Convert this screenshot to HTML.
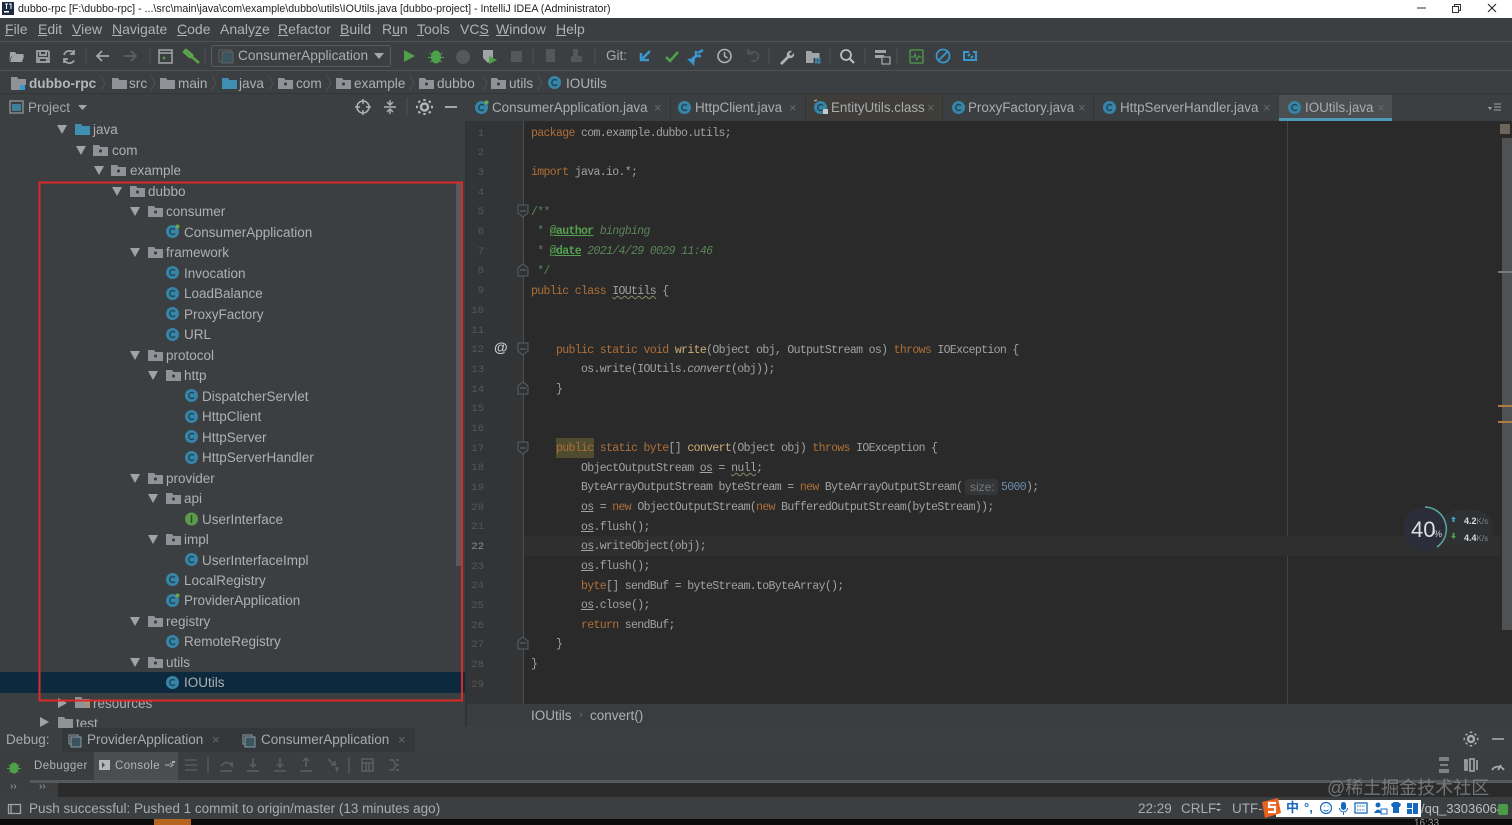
<!DOCTYPE html>
<html><head><meta charset="utf-8"><title>dubbo-rpc</title>
<style>
*{box-sizing:border-box}
html,body{margin:0;padding:0;width:1512px;height:825px;overflow:hidden;background:#3c3f41}
body{position:relative;font-family:"Liberation Sans","Noto Sans CJK SC",sans-serif;color:#b4b6b8;font-size:14px}
.b{position:absolute}
.t{position:absolute;white-space:pre;line-height:20px;height:20px}
.m{position:absolute;top:19px;font-size:14px;line-height:21px;color:#b0b2b4;white-space:pre}
.cr{position:absolute;top:74px;line-height:20px;font-size:13.6px;color:#aeb0b2;white-space:pre}
.tab{position:absolute;top:97px;line-height:21px;font-size:13.4px;color:#aaacae;white-space:pre}
.x{position:absolute;top:98px;line-height:20px;font-size:13px;color:#65686a}
.r{position:absolute;font-size:13.5px;line-height:20px;color:#aeb0b2;white-space:pre;margin-top:1px}
.n{position:absolute;left:470px;width:14px;text-align:right;font:10.5px/14px "Liberation Mono",monospace;color:#55585a;margin-top:1px}
.l{position:absolute;font:11.5px/16px "Liberation Mono",monospace;letter-spacing:-.65px;color:#a0a2a3;white-space:pre;margin-top:1px}
.k{color:#ad6f38}.f{color:#cdae78}.g{color:#5a8558}.gb{color:#55a050;font-weight:bold;text-decoration:underline}
.u{text-decoration:underline}
.w{text-decoration:underline wavy #8a8a6a 1px}
.s{font-size:13.5px;color:#a9abad;margin-top:1px}
</style></head><body>
<!-- title bar -->
<div class="b" style="left:0;top:0;width:1512px;height:18px;background:#fff"></div>
<div class="t" style="left:18px;top:-1px;font-size:10.65px;color:#222">dubbo-rpc [F:\dubbo-rpc] - ...\src\main\java\com\example\dubbo\utils\IOUtils.java [dubbo-project] - IntelliJ IDEA (Administrator)</div>
<!-- bars -->
<div class="b" style="left:0;top:41px;width:1512px;height:1px;background:#505254"></div>
<div class="b" style="left:0;top:70px;width:1512px;height:1px;background:#505254"></div>
<div class="b" style="left:0;top:93px;width:1512px;height:1px;background:#333537"></div>
<!-- menu -->
<div class="m" style="left:5px"><u>F</u>ile</div><div class="m" style="left:38px"><u>E</u>dit</div><div class="m" style="left:72px"><u>V</u>iew</div><div class="m" style="left:112px"><u>N</u>avigate</div><div class="m" style="left:177px"><u>C</u>ode</div><div class="m" style="left:220px">Analy<u>z</u>e</div><div class="m" style="left:278px"><u>R</u>efactor</div><div class="m" style="left:340px"><u>B</u>uild</div><div class="m" style="left:382px">R<u>u</u>n</div><div class="m" style="left:417px"><u>T</u>ools</div><div class="m" style="left:460px">VC<u>S</u></div><div class="m" style="left:496px"><u>W</u>indow</div><div class="m" style="left:556px"><u>H</u>elp</div>
<!-- run config -->
<div class="b" style="left:211px;top:45px;width:180px;height:22px;border:1px solid #5a5d5f;border-radius:3px"></div>
<div class="t" style="left:238px;top:46px;font-size:13.7px;color:#aaacae">ConsumerApplication</div>
<div class="t" style="left:606px;top:46px;font-size:13.5px;color:#a8aaac">Git:</div>
<!-- breadcrumbs -->
<div class="cr" style="left:29px;font-weight:bold;color:#b4b6b8">dubbo-rpc</div><div class="cr" style="left:129px">src</div><div class="cr" style="left:178px">main</div><div class="cr" style="left:239px">java</div><div class="cr" style="left:296px">com</div><div class="cr" style="left:354px">example</div><div class="cr" style="left:437px">dubbo</div><div class="cr" style="left:509px">utils</div><div class="cr" style="left:566px">IOUtils</div>
<!-- project header -->
<div class="t" style="left:28px;top:98px;font-size:13.5px;color:#a4a6a8">Project</div>
<!-- tabs -->
<div class="b" style="left:467px;top:94px;width:1045px;height:27px;background:#3c3f41"></div>
<div class="b" style="left:805px;top:94px;width:137px;height:27px;background:#3f3d39"></div>
<div class="b" style="left:1279px;top:95px;width:113px;height:26px;background:#4b4f52"></div>
<div class="b" style="left:1279px;top:118px;width:113px;height:3px;background:#4a9ab5"></div>
<div class="tab" style="left:492px">ConsumerApplication.java</div><div class="x" style="left:654px">×</div>
<div class="tab" style="left:695px">HttpClient.java</div><div class="x" style="left:789px">×</div>
<div class="tab" style="left:831px">EntityUtils.class</div><div class="x" style="left:927px">×</div>
<div class="tab" style="left:968px">ProxyFactory.java</div><div class="x" style="left:1078px">×</div>
<div class="tab" style="left:1120px">HttpServerHandler.java</div><div class="x" style="left:1263px">×</div>
<div class="tab" style="left:1305px">IOUtils.java</div><div class="x" style="left:1377px">×</div>
<div class="b" style="left:670px;top:94px;width:1px;height:27px;background:#333"></div><div class="b" style="left:805px;top:94px;width:1px;height:27px;background:#333"></div><div class="b" style="left:942px;top:94px;width:1px;height:27px;background:#333"></div><div class="b" style="left:1093px;top:94px;width:1px;height:27px;background:#333"></div>
<!-- tree -->
<div class="b" style="left:0;top:672px;width:465px;height:21px;background:#0d293e"></div>
<div class="b" style="left:456px;top:182px;width:6px;height:384px;background:#585b5d"></div>
<div class="r" style="left:93px;top:119px">java</div>
<div class="r" style="left:112px;top:140px">com</div>
<div class="r" style="left:130px;top:160px">example</div>
<div class="r" style="left:148px;top:181px">dubbo</div>
<div class="r" style="left:166px;top:201px">consumer</div>
<div class="r" style="left:184px;top:222px">ConsumerApplication</div>
<div class="r" style="left:166px;top:242px">framework</div>
<div class="r" style="left:184px;top:263px">Invocation</div>
<div class="r" style="left:184px;top:283px">LoadBalance</div>
<div class="r" style="left:184px;top:304px">ProxyFactory</div>
<div class="r" style="left:184px;top:324px">URL</div>
<div class="r" style="left:166px;top:345px">protocol</div>
<div class="r" style="left:184px;top:365px">http</div>
<div class="r" style="left:202px;top:386px">DispatcherServlet</div>
<div class="r" style="left:202px;top:406px">HttpClient</div>
<div class="r" style="left:202px;top:427px">HttpServer</div>
<div class="r" style="left:202px;top:447px">HttpServerHandler</div>
<div class="r" style="left:166px;top:468px">provider</div>
<div class="r" style="left:184px;top:488px">api</div>
<div class="r" style="left:202px;top:509px">UserInterface</div>
<div class="r" style="left:184px;top:529px">impl</div>
<div class="r" style="left:202px;top:550px">UserInterfaceImpl</div>
<div class="r" style="left:184px;top:570px">LocalRegistry</div>
<div class="r" style="left:184px;top:590px">ProviderApplication</div>
<div class="r" style="left:166px;top:611px">registry</div>
<div class="r" style="left:184px;top:631px">RemoteRegistry</div>
<div class="r" style="left:166px;top:652px">utils</div>
<div class="r" style="left:184px;top:672px">IOUtils</div>
<div class="r" style="left:93px;top:693px">resources</div>
<div class="r" style="left:76px;top:713px">test</div>
<!-- editor -->
<div class="b" style="left:465px;top:121px;width:2px;height:606px;background:#303234"></div>
<div class="b" style="left:467px;top:121px;width:56px;height:583px;background:#323436"></div>
<div class="b" style="left:523px;top:121px;width:989px;height:583px;background:#2a2a2a"></div>
<div class="b" style="left:523px;top:121px;width:1px;height:583px;background:#4d4f50"></div>
<div class="b" style="left:1287px;top:121px;width:1px;height:583px;background:#434343"></div>
<div class="b" style="left:524px;top:536px;width:976px;height:20px;background:#2f2f2f"></div>
<div class="b" style="left:1502px;top:138px;width:10px;height:492px;background:#4f5153"></div>
<div class="b" style="left:1500px;top:124px;width:10px;height:10px;background:#6d655c"></div>
<div class="b" style="left:1498px;top:271px;width:14px;height:2px;background:#77797b"></div>
<div class="b" style="left:1498px;top:405px;width:14px;height:2px;background:#b07c42"></div>
<div class="b" style="left:1498px;top:421px;width:14px;height:2px;background:#b07c42"></div>
<div class="b" style="left:556px;top:438px;width:38px;height:20px;background:#4f4c30"></div>
<div class="b" style="left:965px;top:479px;width:33px;height:16px;background:#353637;border-radius:3px"></div>
<!-- line numbers -->
<div class="n" style="top:126px">1</div><div class="n" style="top:145px">2</div><div class="n" style="top:165px">3</div><div class="n" style="top:185px">4</div><div class="n" style="top:204px">5</div><div class="n" style="top:224px">6</div><div class="n" style="top:244px">7</div><div class="n" style="top:263px">8</div><div class="n" style="top:283px">9</div><div class="n" style="top:303px">10</div><div class="n" style="top:323px">11</div><div class="n" style="top:342px">12</div><div class="n" style="top:362px">13</div><div class="n" style="top:382px">14</div><div class="n" style="top:401px">15</div><div class="n" style="top:421px">16</div><div class="n" style="top:441px">17</div><div class="n" style="top:460px">18</div><div class="n" style="top:480px">19</div><div class="n" style="top:500px">20</div><div class="n" style="top:519px">21</div><div class="n" style="top:539px;color:#8a8c8e">22</div><div class="n" style="top:559px">23</div><div class="n" style="top:578px">24</div><div class="n" style="top:598px">25</div><div class="n" style="top:618px">26</div><div class="n" style="top:637px">27</div><div class="n" style="top:657px">28</div><div class="n" style="top:677px">29</div>
<div class="t" style="left:494px;top:337px;font-size:14px;font-weight:bold;color:#c8cacc">@</div>
<!-- code -->
<div class="l" style="left:531px;top:125px"><span class="k">package</span> com.example.dubbo.utils;</div>
<div class="l" style="left:531px;top:164px"><span class="k">import</span> java.io.*;</div>
<div class="l g" style="left:531px;top:204px">/**</div>
<div class="l g" style="left:531px;top:223px"> * <span class="gb">@author</span> <i>bingbing</i></div>
<div class="l g" style="left:531px;top:243px"> * <span class="gb">@date</span> <i>2021/4/29 0029 11:46</i></div>
<div class="l g" style="left:531px;top:263px"> */</div>
<div class="l" style="left:531px;top:283px"><span class="k">public class</span> <span class="w">IOUtils</span> {</div>
<div class="l" style="left:531px;top:342px">    <span class="k">public static void</span> <span class="f">write</span>(Object obj, OutputStream os) <span class="k">throws</span> IOException {</div>
<div class="l" style="left:531px;top:361px">        os.write(IOUtils.<i>convert</i>(obj));</div>
<div class="l" style="left:531px;top:381px">    }</div>
<div class="l" style="left:531px;top:440px">    <span class="k">public static byte</span>[] <span class="f">convert</span>(Object obj) <span class="k">throws</span> IOException {</div>
<div class="l" style="left:531px;top:460px">        ObjectOutputStream <span class="u">os</span> = <span class="w">null</span>;</div>
<div class="l" style="left:531px;top:479px">        ByteArrayOutputStream byteStream = <span class="k">new</span> ByteArrayOutputStream(</div>
<div class="t" style="left:970px;top:477px;font-size:12px;color:#777a7c">size:</div>
<div class="l" style="left:1001px;top:479px"><span style="color:#6b8db0">5000</span>);</div>
<div class="l" style="left:531px;top:499px">        <span class="u">os</span> = <span class="k">new</span> ObjectOutputStream(<span class="k">new</span> BufferedOutputStream(byteStream));</div>
<div class="l" style="left:531px;top:519px">        <span class="u">os</span>.flush();</div>
<div class="l" style="left:531px;top:538px">        <span class="u">os</span>.writeObject(obj);</div>
<div class="l" style="left:531px;top:558px">        <span class="u">os</span>.flush();</div>
<div class="l" style="left:531px;top:578px">        <span class="k">byte</span>[] sendBuf = byteStream.toByteArray();</div>
<div class="l" style="left:531px;top:597px">        <span class="u">os</span>.close();</div>
<div class="l" style="left:531px;top:617px">        <span class="k">return</span> sendBuf;</div>
<div class="l" style="left:531px;top:636px">    }</div>
<div class="l" style="left:531px;top:656px">}</div>
<!-- editor breadcrumb -->
<div class="b" style="left:467px;top:704px;width:1045px;height:23px;background:#3a3c3e"></div>
<div class="t s" style="left:531px;top:705px;color:#aeb0b2">IOUtils</div>
<div class="t" style="left:579px;top:705px;font-size:11px;color:#66686a">›</div>
<div class="t s" style="left:590px;top:705px;color:#aeb0b2">convert()</div>
<!-- debug -->
<div class="b" style="left:0;top:727px;width:1512px;height:25px;background:#3c3f41"></div>
<div class="b" style="left:62px;top:728px;width:168px;height:24px;background:#35383a"></div>
<div class="b" style="left:230px;top:728px;width:185px;height:24px;background:#35383a"></div>
<div class="t s" style="left:6px;top:729px">Debug:</div>
<div class="t s" style="left:87px;top:729px">ProviderApplication</div><div class="t" style="left:212px;top:730px;font-size:13px;color:#65686a">×</div>
<div class="t s" style="left:261px;top:729px">ConsumerApplication</div><div class="t" style="left:398px;top:730px;font-size:13px;color:#65686a">×</div>
<div class="b" style="left:0;top:752px;width:1512px;height:28px;background:#3b3d3f"></div>
<div class="b" style="left:94px;top:752px;width:84px;height:28px;background:#4b4e50"></div>
<div class="t" style="left:34px;top:756px;font-size:11.5px;letter-spacing:.4px;color:#b0b2b4">Debugger</div>
<div class="t" style="left:115px;top:756px;font-size:11.5px;letter-spacing:.4px;color:#b0b2b4">Console</div>
<div class="b" style="left:30px;top:780px;width:1482px;height:3px;background:#56595b"></div>
<div class="b" style="left:0;top:780px;width:30px;height:17px;background:#3b3d3f"></div>
<div class="b" style="left:30px;top:783px;width:28px;height:14px;background:#3b3d3f"></div>
<div class="b" style="left:58px;top:783px;width:1454px;height:14px;background:#2b2b2b"></div>
<div class="t" style="left:10px;top:777px;font-size:10px;color:#a0a2a4">››</div><div class="t" style="left:39px;top:777px;font-size:10px;color:#a0a2a4">››</div>
<!-- status -->
<div class="b" style="left:0;top:797px;width:1512px;height:22px;background:#3c3f41"></div>
<div class="t s" style="left:29px;top:798px">Push successful: Pushed 1 commit to origin/master (13 minutes ago)</div>
<div class="t s" style="left:1138px;top:798px">22:29</div>
<div class="t s" style="left:1181px;top:798px">CRLF</div>
<div class="t s" style="left:1232px;top:798px">UTF-</div>
<div class="t" style="left:1421px;top:799px;font-size:13px;color:#bcbec0">/qq_33036064</div>
<div class="b" style="left:0;top:819px;width:1512px;height:6px;background:#0c0c0c;overflow:hidden"><div class="t" style="left:1414px;top:-5px;font-size:10px;color:#999">16:33</div></div>
<div class="b" style="left:154px;top:819px;width:37px;height:6px;background:#b5651d"></div>
<div class="b" style="left:1276px;top:800px;width:145px;height:17px;background:#fff"></div>
<div class="t" style="left:1286px;top:798px;font-size:13px;font-weight:bold;color:#1769c0">中</div>
<div class="t" style="left:1304px;top:798px;font-size:13px;font-weight:bold;color:#1769c0">°,</div>
<div class="t" style="left:1327px;top:778px;font-size:18px;color:#8a8c8e;opacity:.75">@稀土掘金技术社区</div>
<!-- all icons -->
<svg class="b" style="left:0;top:0" width="1512" height="825" viewBox="0 0 1512 825" fill="none">
<defs>
<g id="fd"><path d="M0 2h6l1.500 2H15v9H0z" fill="#8f9296"/><rect x="6" y="6.500" width="3" height="3" rx="1" fill="#3c3f41"/></g>
<g id="fp"><path d="M0 2h6l1.500 2H15v9H0z" fill="#8f9296"/></g>
<g id="fb"><path d="M0 2h6l1.500 2H15v9H0z" fill="#3f8fb3"/></g>
<path id="ad" d="M0 0h10L5 9z" fill="#a0a2a4"/>
<path id="ar" d="M0 0l9 5-9 5z" fill="#a0a2a4"/>
<g id="cc"><circle cx="6.500" cy="6.500" r="6.500" fill="#3785a8"/><path d="M9 4.500A3 3 0 1 0 9 8.500" stroke="#1f4a5c" stroke-width="1.500"/></g>
<g id="ca"><use href="#cc"/><circle cx="11.500" cy="1.500" r="2" fill="#6aa84f"/></g>
<path id="fo" d="M0 0h10v8l-5 4-5-4z" stroke="#5c5f61" fill="#2f3133"/>
<path id="fc" d="M0 12h10V4L5 0 0 4z" stroke="#5c5f61" fill="#2f3133"/>
</defs>
<!-- logo & window buttons -->
<rect x="2" y="2" width="12" height="13" fill="#1c2a44"/><path d="M4 11h5v1.500H4z" fill="#fff"/><path d="M5 4h3M6.500 4v5M9 4h2v5" stroke="#fff"/>
<path d="M1417 8h9" stroke="#333"/><path d="M1452.500 6.500h6v6h-6zM1454.500 6.500v-2h6v6h-2" stroke="#333"/><path d="M1488 4l8 8M1496 4l-8 8" stroke="#222" stroke-width="1.100"/>
<!-- toolbar -->
<path d="M10 52h5l1.500 2h7v2h-12l-2 5zM12 56h12l-2 6H10z" fill="#a2a5a8"/>
<path d="M37 51h11l1 1v10H37zM40 51v4h6v-4M39 58h8v4h-8z" stroke="#a2a5a8" stroke-width="1.700"/>
<path d="M74 53.500A5.500 5.500 0 0 0 64 55M64 59a5.500 5.500 0 0 0 10 1.500M74 50v4h-4M64 63v-4h4" stroke="#a2a5a8" stroke-width="1.700"/>
<path d="M86 48v16M150 48v16M205 48v16M533 48v16M595 48v16M769 48v16M830 48v16M865 48v16M897 48v16" stroke="#4d5052"/>
<path d="M109 56H97M102 51l-5 5 5 5" stroke="#a2a5a8" stroke-width="1.800"/>
<path d="M124 56h12M131 51l5 5-5 5" stroke="#5c5f61" stroke-width="1.800"/>
<path d="M159 50h13v13h-13zM159 53h13" stroke="#a2a5a8" stroke-width="1.500"/><path d="M163 56l3 2-3 2z" fill="#5a9a4a"/>
<path d="M186 50l6 5-2 2-6-5zM191 56l8 7" stroke="#5aa64c" stroke-width="2.500"/>
<rect x="219" y="50" width="12" height="12" stroke="#5e6264" stroke-width="1"/><rect x="222" y="52" width="11" height="11" fill="#3a5560" stroke="#5e6264"/>
<path d="M374 53h10l-5 6z" fill="#a5a7a9"/>
<path d="M404 50l11 6-11 6z" fill="#4ea04a"/>
<g fill="#4ea04a"><ellipse cx="436" cy="57" rx="5" ry="6.500"/><path d="M429 52l3 2-1 1zM443 52l-3 2 1 1zM428 57h4v1h-4zM440 57h4v1h-4zM429 63l3-3 1 1zM443 63l-3-3-1 1z"/></g>
<circle cx="463" cy="57" r="7" fill="#565859"/>
<path d="M483 50h10v8l-5 5-5-5z" fill="#a2a5a8"/><path d="M489 56l8 4-8 4z" fill="#4ea04a"/>
<rect x="511" y="51" width="11" height="11" fill="#55575a"/>
<path d="M546 49h9v13h-9z" fill="#55575a"/><path d="M573 49h5v7h4v6h-11v-6h2z" fill="#55575a"/>
<path d="M650 51l-8 8M641 53v7h8" stroke="#3a97d0" stroke-width="2.500"/>
<path d="M666 57l4 4 8-9" stroke="#4ea04a" stroke-width="2.500"/>
<path d="M691 60l5-4M698 53l5-3M696 51v5h5M695 60h-5l3 3v-3" stroke="#3a97d0" stroke-width="2.500"/>
<circle cx="724.500" cy="56" r="6.500" stroke="#b0b2b4" stroke-width="1.600"/><path d="M724.500 52v4l3 2" stroke="#b0b2b4" stroke-width="1.500"/>
<path d="M748 52h6a4.500 4.500 0 0 1 0 9h-3M748 49v5h5" stroke="#555759" stroke-width="1.500"/>
<path d="M780 63l7-7a4 4 0 0 1 5-5l-3 3 2 2 3-3a4 4 0 0 1-5 5l-7 7z" fill="#b0b2b4"/>
<path d="M806 51h5l1.500 2h7v5h-6v5h-7.500z" fill="#a2a5a8"/><rect x="815" y="58" width="2.500" height="2.500" fill="#3b8cb0"/><rect x="818" y="58" width="2.500" height="2.500" fill="#3b8cb0"/><rect x="815" y="61" width="2.500" height="2.500" fill="#3b8cb0"/><rect x="818" y="61" width="2.500" height="2.500" fill="#3b8cb0"/>
<circle cx="846" cy="55" r="5" stroke="#bbbdbf" stroke-width="1.800"/><path d="M850 59l4 4" stroke="#bbbdbf" stroke-width="2.200"/>
<path d="M875 50h11v3h-11zM875 55h9v3h-9z" fill="#a2a5a8"/><path d="M882 57h8v7h-8z" fill="#3c3f41" stroke="#a2a5a8" stroke-width="1.300"/>
<rect x="910" y="50" width="13" height="13" rx="1" stroke="#4ea04a" stroke-width="1.300"/><path d="M911 57h3l1-3 2 6 2-4 1 1h2" stroke="#4ea04a"/>
<circle cx="943" cy="56" r="6.500" stroke="#3a97d0" stroke-width="1.700"/><path d="M939 60l8-8" stroke="#3a97d0" stroke-width="1.700"/>
<path d="M969 52h-5v8h12v-8h-3M968 56l2-2M973 56l-2 2" stroke="#3a97d0" stroke-width="2"/>
<!-- breadcrumbs icons -->
<path d="M11 77h6l1.500 2H26v6h-6v5h-9z" fill="#8f9296"/><rect x="20" y="85" width="5" height="5" fill="#3a97d0"/>
<use href="#fp" x="112" y="76"/><use href="#fp" x="160" y="76"/><use href="#fb" x="222" y="76"/><use href="#fd" x="278" y="76"/><use href="#fd" x="336" y="76"/><use href="#fd" x="419" y="76"/><use href="#fd" x="491" y="76"/><use href="#cc" x="548" y="76"/>
<g stroke="#4e5153"><path d="M101 76l4 7-4 7M151 76l4 7-4 7M212 76l4 7-4 7M269 76l4 7-4 7M327 76l4 7-4 7M410 76l4 7-4 7M483 76l4 7-4 7M538 76l4 7-4 7"/></g>
<!-- project bar icons -->
<rect x="10" y="101" width="13" height="12" stroke="#9a9da0" stroke-width="1.200"/><rect x="12" y="104" width="9" height="7" fill="#3f7f9a"/>
<path d="M78 105h9l-4.500 5z" fill="#a2a5a8"/>
<circle cx="363" cy="107" r="6" stroke="#b0b2b4" stroke-width="1.500"/><path d="M363 99v5M363 110v5M355 107h5M366 107h5" stroke="#b0b2b4" stroke-width="1.400"/>
<path d="M384 107h12M390 100v4M387 102l3 3 3-3M390 114v-4M387 112l3-3 3 3" stroke="#b0b2b4" stroke-width="1.400"/>
<path d="M407 98v18" stroke="#4d5052"/>
<circle cx="424.500" cy="107" r="3.500" stroke="#b0b2b4" stroke-width="2.500"/><path d="M424.500 101v-2M424.500 115v-2M418 107h-2M433 107h-2M420 102.500l-1.500-1.500M430.500 113l-1.500-1.500M429 102.500l1.500-1.500M418.500 113l1.500-1.500" stroke="#b0b2b4" stroke-width="2.500"/>
<path d="M445 107h12" stroke="#b0b2b4" stroke-width="1.800"/>
<!-- tabs icons -->
<use href="#ca" x="475" y="101"/><use href="#cc" x="678" y="101"/><use href="#cc" x="814" y="101"/><path d="M814 101l3-1" stroke="#bbb"/><rect x="823" y="109" width="5" height="5" fill="#c5c7c9"/><use href="#cc" x="952" y="101"/><use href="#cc" x="1103" y="101"/><use href="#cc" x="1288" y="101"/>
<path d="M1488 107h4l-2 3z" fill="#a2a5a8"/><path d="M1494 104h7M1494 107h7M1494 110h7" stroke="#a2a5a8"/>
<!-- tree arrows/folders -->
<use href="#ad" x="57" y="125"/><use href="#fb" x="75" y="122"/>
<use href="#ad" x="76" y="146"/><use href="#fd" x="93" y="143"/>
<use href="#ad" x="94" y="166"/><use href="#fd" x="111" y="163"/>
<use href="#ad" x="112" y="187"/><use href="#fd" x="130" y="184"/>
<use href="#ad" x="130" y="207"/><use href="#fd" x="148" y="204"/>
<use href="#ad" x="130" y="248"/><use href="#fd" x="148" y="245"/>
<use href="#ad" x="130" y="351"/><use href="#fd" x="148" y="348"/>
<use href="#ad" x="148" y="371"/><use href="#fd" x="166" y="368"/>
<use href="#ad" x="130" y="474"/><use href="#fd" x="148" y="471"/>
<use href="#ad" x="148" y="494"/><use href="#fd" x="166" y="491"/>
<use href="#ad" x="148" y="535"/><use href="#fd" x="166" y="532"/>
<use href="#ad" x="130" y="617"/><use href="#fd" x="148" y="614"/>
<use href="#ad" x="130" y="658"/><use href="#fd" x="148" y="655"/>
<use href="#ar" x="58" y="698"/><use href="#fp" x="75" y="695"/><path d="M85 700h5M85 703h5M85 706h5" stroke="#c99a3c"/>
<use href="#ar" x="40" y="717"/><use href="#fp" x="58" y="715"/>
<use href="#ca" x="166" y="225"/><use href="#cc" x="166" y="266"/><use href="#cc" x="166" y="287"/><use href="#cc" x="166" y="307"/><use href="#cc" x="166" y="328"/>
<use href="#cc" x="185" y="389"/><use href="#cc" x="185" y="410"/><use href="#cc" x="185" y="430"/><use href="#cc" x="185" y="451"/>
<circle cx="191.500" cy="519" r="6.500" fill="#5c9a4c"/><path d="M191.500 515v8" stroke="#2d4a26" stroke-width="1.500"/>
<use href="#cc" x="185" y="553"/><use href="#cc" x="166" y="573"/><use href="#ca" x="166" y="594"/><use href="#cc" x="166" y="635"/><use href="#cc" x="166" y="676"/>
<!-- red frame -->
<rect x="39.500" y="182.500" width="422.500" height="518" stroke="#dd2a26" stroke-width="2"/>
<!-- fold marks -->
<use href="#fo" x="518" y="205"/><use href="#fc" x="518" y="264"/><use href="#fo" x="518" y="343"/><use href="#fc" x="518" y="382"/><use href="#fo" x="518" y="442"/><use href="#fc" x="518" y="637"/>
<path d="M520 211h6M520 270h6M520 349h6M520 388h6M520 448h6M520 643h6" stroke="#6a6d6f"/>
<!-- wave widget -->
<rect x="1440" y="510" width="53" height="37" rx="18" fill="#2e3032"/>
<circle cx="1425" cy="529" r="22" fill="#2b2e38"/>
<path d="M1425 507A22 22 0 0 1 1437 547" stroke="#5aa9a0" stroke-width="1.500"/>
<path d="M1451 519l2.500-2.500 2.500 2.500h-1.500v3h-2v-3z" fill="#4aa3c8"/><path d="M1451 536l2.500 3 2.500-3h-1.500v-3h-2v3z" fill="#4ea04a"/>
<text x="1411" y="537" font-family="Liberation Sans" font-size="22" fill="#dcdee0">40</text><text x="1434" y="537" font-family="Liberation Sans" font-size="9" fill="#d4d6d8">%</text>
<text x="1464" y="524" font-family="Liberation Sans" font-size="9" font-weight="bold" fill="#d8dadc">4.2<tspan font-size="8" font-weight="normal" fill="#80848a">K/s</tspan></text>
<text x="1464" y="541" font-family="Liberation Sans" font-size="9" font-weight="bold" fill="#d8dadc">4.4<tspan font-size="8" font-weight="normal" fill="#80848a">K/s</tspan></text>
<!-- debug icons -->
<g stroke="#8a9aa5"><rect x="69" y="735" width="9" height="9"/><rect x="71" y="737" width="10" height="10" fill="#3a5560"/><rect x="243" y="735" width="9" height="9"/><rect x="245" y="737" width="10" height="10" fill="#3a5560"/></g>
<g fill="#4ea04a"><ellipse cx="14" cy="768" rx="4.500" ry="5.500"/><path d="M8 764l3 2-1 1zM20 764l-3 2 1 1zM7 768h4v1H7zM17 768h4v1h-4zM8 773l3-3 1 1zM20 773l-3-3-1 1z"/></g>
<rect x="99" y="760" width="11" height="10" fill="#b5b7b9"/><path d="M102 762l3 3-3 3z" fill="#4b4e50"/>
<path d="M165 765h5M170 763l3 2-3 2" stroke="#b0b2b4"/><rect x="172" y="761" width="3" height="2" fill="#b0b2b4"/>
<path d="M185 760h12M185 765h12M185 770h12M208 757v16M349 757v16" stroke="#5c5f61" stroke-width="1.300"/>
<g stroke="#5c5f61" stroke-width="1.500"><path d="M220 771h12M221 766q5-6 9-2l2 2v-4"/><path d="M247 771h12M253 758v9M250 764l3 3 3-3"/><path d="M274 771h12M280 758v9M277 764l3 3 3-3"/><path d="M300 771h12M306 767v-9M303 761l3-3 3 3"/><path d="M328 759l7 6M335 761v4h-4M337 768v4M339 768h-4"/><path d="M362 759h11v12h-11zM362 763h11M366 763v8M369 763v8"/><path d="M389 760h4l3 5h3M389 770h4l3-5M396 760h3M396 770h3"/></g>
<path d="M1439 760h10M1440 765h8M1439 770h10M1439 758h10M1439 772h10" stroke="#a8aaac" stroke-width="1.300"/>
<path d="M1465 760h2v10h-2zM1470 759h4v12h-4zM1477 760v10" stroke="#a8aaac" stroke-width="1.600"/>
<path d="M1492 770a7 7 0 0 1 12 0M1498 770l3-5" stroke="#a8aaac" stroke-width="1.800"/>
<circle cx="1471" cy="739" r="3" stroke="#a8aaac" stroke-width="2.500"/><path d="M1471 733v-1.500M1471 746.500V745M1465 739h-1.500M1478.500 739H1477M1467 735l-1-1M1476 744l-1-1M1475 735l1-1M1466 744l1-1" stroke="#a8aaac" stroke-width="2.500"/>
<path d="M1492 739h12" stroke="#a8aaac" stroke-width="1.600"/>
<!-- status icons -->
<path d="M8.500 804.500h12v9h-12zM11 804.500v9" stroke="#a2a5a8" stroke-width="1.300"/>
<path d="M1216 805l2.500-2.500 2.500 2.500zM1216 809l2.500 2.500 2.500-2.500z" fill="#adafb1"/>
<!-- sogou -->
<path d="M1262 802l16-4 3 15-16 5z" fill="#e8621e"/><path d="M1276 803h-7v4h6v5h-7" stroke="#fff" stroke-width="2.200"/>
<circle cx="1326" cy="808" r="5.500" stroke="#1769c0" stroke-width="1.200"/><path d="M1323.500 810q2.500 2 5 0" stroke="#1769c0"/><path d="M1324 806h1M1327.500 806h1" stroke="#1769c0"/>
<rect x="1341" y="802" width="5" height="8" rx="2.500" fill="#1769c0"/><path d="M1339.500 808a4 4 0 0 0 8 0M1343.500 812v3" stroke="#1769c0"/>
<rect x="1355" y="803" width="12" height="10" stroke="#1769c0" stroke-width="1.300"/><path d="M1357 806h8M1357 810h8" stroke="#1769c0" stroke-dasharray="1.500 1"/>
<circle cx="1378" cy="805" r="2.500" fill="#1769c0"/><path d="M1374 813q4-7 8 0z" fill="#1769c0"/><rect x="1381" y="809" width="6" height="5" stroke="#1769c0"/>
<path d="M1391 804l3-2h4l3 2-1 3h-1v6h-6v-6h-1z" fill="#1769c0"/>
<path d="M1407 803h5v5h-5zM1407 809h5v5h-5zM1413 803h5v11h-5z" fill="#1769c0"/>
<rect x="1498" y="804" width="10" height="11" rx="2" fill="#4a9a4a"/>
</svg>
</body></html>
